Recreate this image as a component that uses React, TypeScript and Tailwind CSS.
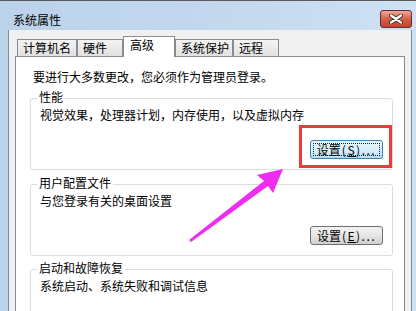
import type { ReactNode } from 'react';

const tabs = [
  { label: '计算机名', cls: 'w-[60px] h-[17px] pl-[5px] bg-gradient-to-b from-[#f4f4f4] to-[#e1e1e1]' },
  { label: '硬件', cls: 'w-[46px] h-[17px] pl-[5px] bg-gradient-to-b from-[#f4f4f4] to-[#e1e1e1]' },
  { label: '高级', cls: 'relative z-10 -mb-px w-[52px] h-[21px] pl-[6px] bg-white' },
  { label: '系统保护', cls: 'w-[58px] h-[17px] pl-[5px] bg-gradient-to-b from-[#f4f4f4] to-[#e1e1e1]' },
  { label: '远程', cls: 'w-[46px] h-[17px] pl-[5px] bg-gradient-to-b from-[#f4f4f4] to-[#e1e1e1]' },
];

function Label({ text, accel }: { text: string; accel: string }) {
  return (
    <span className="text-[12px] leading-[12px]">
      {text}
      <span className="ml-[1px] tracking-[1.5px]">
        (<span className="underline">{accel}</span>)...
      </span>
    </span>
  );
}

function WinButton({ text, accel, focused }: { text: string; accel: string; focused?: boolean }) {
  if (focused) {
    return (
      <div className="flex h-[19px] w-[73px] items-center justify-center rounded-[3px] border border-[#3c7fb1] bg-gradient-to-b from-[#eaf6fd] via-[#d9f0fc] to-[#b6dff6] p-[2px]">
        <div className="flex h-full w-full items-center justify-center border border-dotted border-[#222]">
          <Label text={text} accel={accel} />
        </div>
      </div>
    );
  }
  return (
    <div className="flex h-[19px] w-[73px] items-center justify-center rounded-[3px] border border-[#707070] bg-gradient-to-b from-[#f2f2f2] via-[#e6e6e6] to-[#cfcfcf]">
      <Label text={text} accel={accel} />
    </div>
  );
}

function GroupBox({ title, desc, children, className = '' }: { title: string; desc: string; children?: ReactNode; className?: string }) {
  return (
    <div className={`relative ml-[14px] mr-[11px] h-[72px] shrink-0 rounded-[3px] border border-[#d5dfe5] ${className}`}>
      <span className="absolute left-[6px] top-[-8px] bg-white px-[2px] text-[12px] leading-[12px]">{title}</span>
      <div className="pl-[9px] pt-[10px] text-[12px] leading-[12px]">{desc}</div>
      {children && <div className="mt-[19px] flex justify-end pr-[9px]">{children}</div>}
    </div>
  );
}

export default function App() {
  return (
    <div className="relative flex h-[311px] w-[416px] flex-col overflow-hidden border-t border-[#5a5a5a] bg-gradient-to-r from-[#bad2ea] via-[#c3d8ee] to-[#cfe1f3] font-['Noto_Sans_CJK_SC',sans-serif] text-black">
      {/* title bar */}
      <div className="flex h-[29px] shrink-0 items-start justify-between">
        <span className="ml-[13px] mt-[13px] text-[12px] leading-[12px]">系统属性</span>
        <div className="mr-[4px] mt-[9px] flex h-[18px] w-[32px] items-center justify-center rounded-[3px] border border-[#6b2a20] bg-gradient-to-b from-[#e9a99a] via-[#d2604b] to-[#c2442f]">
          <svg width="14" height="10" viewBox="0 0 14 10">
            <path d="M2 1.5 L12 8.5 M12 1.5 L2 8.5" stroke="#4a2a26" strokeWidth="4" strokeLinecap="round" />
            <path d="M2 1.5 L12 8.5 M12 1.5 L2 8.5" stroke="#ffffff" strokeWidth="2.2" strokeLinecap="round" />
          </svg>
        </div>
      </div>

      {/* client area */}
      <div className="ml-[8px] flex w-[404px] flex-1 flex-col border-x border-[#7d8a99] bg-[#f0f0f0] px-[6px] pt-[6px]">
        <div className="flex h-[20px] shrink-0 items-end pl-[2px]">
          {tabs.map((t) => (
            <div key={t.label} className={`${t.cls} shrink-0 border-x border-t border-[#898c95] pt-[2px] text-[12px] leading-[12px]`}>
              {t.label}
            </div>
          ))}
        </div>
        <div className="flex flex-1 flex-col border border-[#898c95] bg-white">
          <div className="ml-[17px] mt-[14px] text-[12px] leading-[12px]">要进行大多数更改，您必须作为管理员登录。</div>
          <GroupBox title="性能" desc="视觉效果，处理器计划，内存使用，以及虚拟内存" className="mt-[15px]">
            <WinButton text="设置" accel="S" focused />
          </GroupBox>
          <GroupBox title="用户配置文件" desc="与您登录有关的桌面设置" className="mt-[14px]">
            <WinButton text="设置" accel="E" />
          </GroupBox>
          <GroupBox title="启动和故障恢复" desc="系统启动、系统失败和调试信息" className="mt-[13px]" />
        </div>
      </div>

      {/* annotation overlay */}
      <div className="absolute left-[299px] top-[124px] h-[43px] w-[93px] border-[3px] border-[#f03a3a]" />
      <svg className="absolute left-0 top-0" width="416" height="311" viewBox="0 0 416 311">
        <polygon points="283,168 257,174 264,180 189,239 191,241 268,185 273,192" fill="#f02cf0" />
      </svg>
    </div>
  );
}
